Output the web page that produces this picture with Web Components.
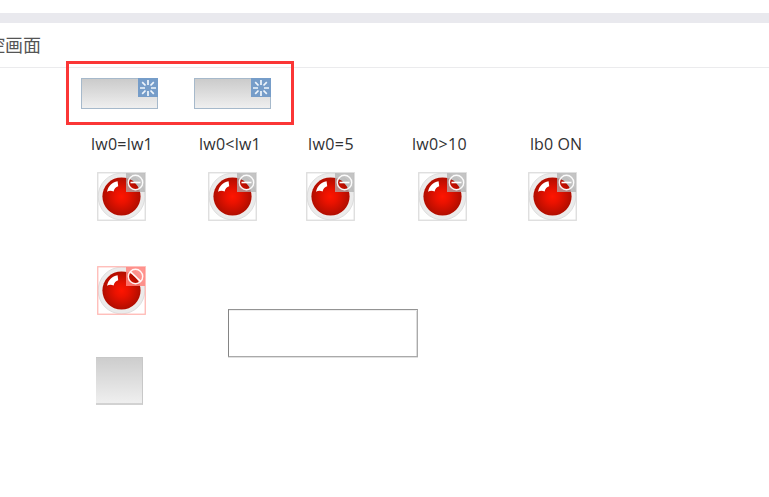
<!DOCTYPE html>
<html lang="zh"><head><meta charset="utf-8"><title>控画面</title>
<style>body{margin:0;background:#fff;overflow:hidden}</style></head>
<body>
<hmi-page>
  <hmi-header slot="header">控画面</hmi-header>
  <hmi-button style="left:81px;top:78px"></hmi-button>
  <hmi-button style="left:194px;top:78px"></hmi-button>
  <hmi-selection style="left:66px;top:61px"></hmi-selection>
  <hmi-label style="left:91px;--w:62px">lw0=lw1</hmi-label>
  <hmi-label style="left:199px;--w:62px">lw0&lt;lw1</hmi-label>
  <hmi-label style="left:308px;--w:46px">lw0=5</hmi-label>
  <hmi-label style="left:412px;--w:55px">lw0&gt;10</hmi-label>
  <hmi-label style="left:530px;--w:52px">lb0 ON</hmi-label>
  <hmi-lamp style="left:97px;top:172px"></hmi-lamp>
  <hmi-lamp style="left:208px;top:172px"></hmi-lamp>
  <hmi-lamp style="left:306px;top:172px"></hmi-lamp>
  <hmi-lamp style="left:418px;top:172px"></hmi-lamp>
  <hmi-lamp style="left:528px;top:172px"></hmi-lamp>
  <hmi-lamp blocked style="left:97px;top:266px"></hmi-lamp>
  <hmi-input style="left:228px;top:309px"></hmi-input>
  <hmi-tile style="left:96px;top:357px"></hmi-tile>
</hmi-page>
<script>
const define = (name, html) => customElements.define(name, class extends HTMLElement {
  constructor() {
    super();
    this.attachShadow({mode: 'open'}).innerHTML = html;
  }
});
define('hmi-page', `<style>
:host{display:flex;flex-direction:column;width:769px;height:497px;background:#fff;position:relative}
.band{height:10px;margin-top:13px;background:#e9e9ee;flex:none}
</style><div class="band"></div><slot name="header"></slot><slot></slot>`);
define('hmi-header', `<style>
:host{display:flex;align-items:flex-start;height:44px;border-bottom:1px solid #ebebed;color:#555;font:18px/42px "Noto Sans CJK SC",sans-serif;flex:none;white-space:nowrap}
span{margin-left:-13px}
</style><span><slot></slot></span>`);
define('hmi-button', `<style>
:host{position:absolute;box-sizing:border-box;width:77px;height:31px;border:1px solid #a6b9cb;background:linear-gradient(#cbcbcb,#efefef)}
svg{position:absolute;right:-1px;top:-1px}
</style><svg width="20" height="20" viewBox="0 0 20 20"><rect width="20" height="19" fill="#769dc9"/><g stroke="#f0f6fc" stroke-width="1.7"><path d="M10 2v5M10 13v5M2 10h5M13 10h5"/><path d="M4.2 4.2l3.3 3.3M12.5 12.5l3.3 3.3M4.2 15.8l3.3-3.3M12.5 7.5l3.3-3.3"/></g></svg>`);
define('hmi-selection', `<style>:host{position:absolute;box-sizing:border-box;width:228px;height:64px;border:3px solid #fb3636}</style>`);
define('hmi-tile', `<style>:host{position:absolute;box-sizing:border-box;width:47px;height:48px;border:solid #c8c8c8;border-width:1px 1px 2px 0;border-bottom-color:#d2d2d2;background:linear-gradient(#cdcdcd,#efefef)}</style>`);
define('hmi-input', `<style>:host{position:absolute;box-sizing:border-box;width:190px;height:48px;border:1px solid #949494;border-left-color:#858585;border-right-color:#aaa;border-bottom-color:#aaa;box-shadow:inset 0 1px #eee,inset -1px 0 #ddd,0 1px #e0e0e0}</style>`);
customElements.define('hmi-label', class extends HTMLElement {
  connectedCallback() {
    this.attachShadow({mode: 'open'}).innerHTML = `<style>
:host{position:absolute;top:133px;height:22px;font:16px/22px "Open Sans","Noto Sans",sans-serif;color:#303133;white-space:pre}
span{display:inline-block}
</style><span><slot></slot></span>`;
    const span = this.shadowRoot.querySelector('span');
    const target = parseFloat(this.style.getPropertyValue('--w'));
    const width = span.getBoundingClientRect().width;
    span.style.letterSpacing = (target - width) / this.textContent.length + 'px';
  }
});
customElements.define('hmi-lamp', class extends HTMLElement {
  connectedCallback() {
    const blocked = this.hasAttribute('blocked');
    this.attachShadow({mode: 'open'}).innerHTML = `<style>
:host{position:absolute;width:49px;height:49px}svg{display:block}
</style><svg width="49" height="49" viewBox="0 0 49 49">
<defs><radialGradient id="g"><stop offset="0" stop-color="#ff1500"/><stop offset=".35" stop-color="#ea1200"/><stop offset="1" stop-color="#b00d00"/></radialGradient>
<clipPath id="c"><circle cx="38.5" cy="10.5" r="6.8"/></clipPath></defs>
<circle cx="24.5" cy="24.5" r="23.3" fill="#ebebeb" stroke="#dedede"/>
<circle cx="24.5" cy="24.5" r="19.7" fill="#f4eeed"/>
<circle cx="24.5" cy="24.5" r="19.1" fill="url(#g)"/>
<path d="M10 19.7C11.2 14.2 15 10.3 20.6 9.3L21.2 14.2Q17.6 15.2 16.6 19.4Q13 18.2 10 19.7Z" fill="#fff"/>
<rect x=".75" y=".75" width="47.5" height="47.5" fill="none" stroke="${blocked ? '#ffb9b4' : '#dcdcdc'}" stroke-width="1.3"/>
<rect x="29" y="1" width="19" height="19" fill="${blocked ? '#ff817b' : '#b0b0b0'}" fill-opacity="${blocked ? .85 : .75}"/>
<circle cx="24.5" cy="24.5" r="19.1" fill="url(#g)" clip-path="url(#c)"/>
<circle cx="38.5" cy="10.5" r="7.2" fill="none" stroke="#fff" stroke-opacity=".92" stroke-width="1.4"/>
<path d="${blocked ? 'M33.3 5.5l10.4 10' : 'M33.5 10.5h10'}" stroke="#fff" stroke-width="1.6"/>
</svg>`;
  }
});
</script>
</body></html>
